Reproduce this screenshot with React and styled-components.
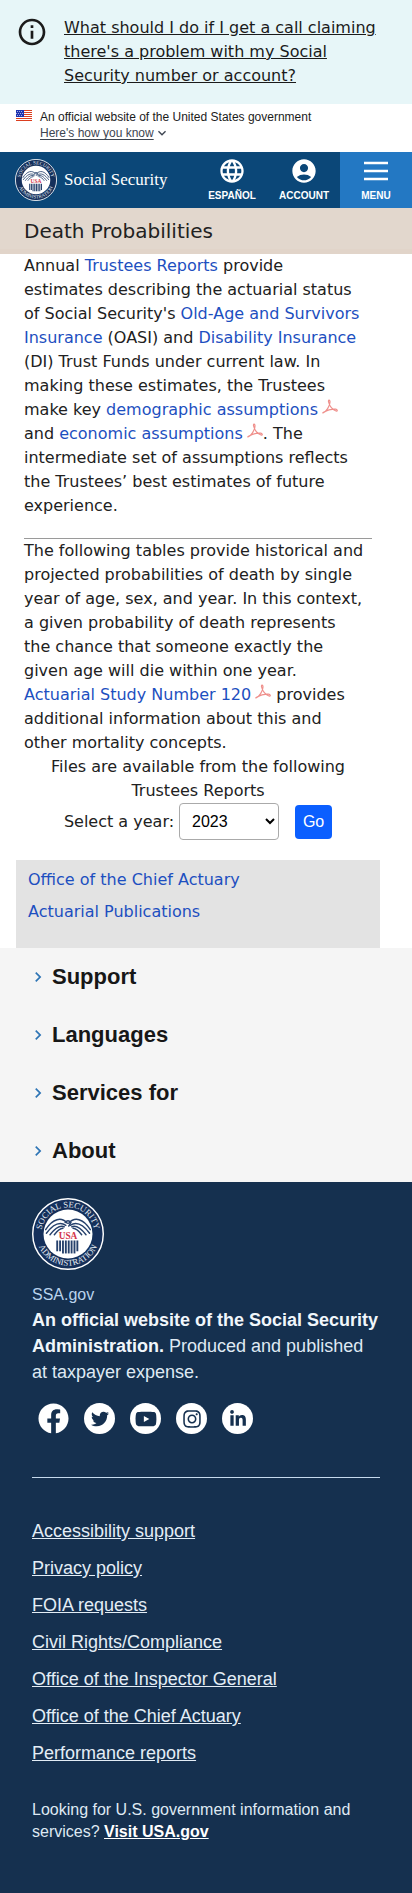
import React from "react";
import styled, { createGlobalStyle } from "styled-components";
import { MdInfoOutline, MdLanguage, MdAccountCircle, MdExpandMore, MdChevronRight } from "react-icons/md";
import { FaFacebook, FaTwitter, FaYoutube, FaInstagram, FaLinkedinIn } from "react-icons/fa";

const sans = `"Liberation Sans", Arial, sans-serif`;
const wide = `"DejaVu Sans", Verdana, sans-serif`;

const GlobalStyle = createGlobalStyle`
  *, *::before, *::after { box-sizing: border-box; }
  body { margin: 0; background: #fff; color: #212121; font: 16px/24px ${wide}; }
  p, h1, h2, ul { margin: 0; padding: 0; }
  ul { list-style: none; }
`;

const Alert = styled.aside`
  display: flex;
  gap: 16px;
  padding: 16px 24px 16px 16px;
  background: #e7f6f8;
`;
const AlertIcon = styled(MdInfoOutline)`
  flex: none;
  width: 32px;
  height: 32px;
  color: #1b1b1b;
`;
const AlertLink = styled.a`
  color: #1b1b1b;
`;

const GovBanner = styled.div`
  display: flex;
  gap: 8px;
  padding: 5px 16px 11px;
  font: 12px/16px ${sans};
  color: #1b1b1b;
  svg { flex: none; }
`;
const Flag = styled.svg`
  width: 16px;
  height: 11px;
  margin-top: 1px;
`;
const BannerButton = styled.button`
  display: flex;
  align-items: center;
  padding: 0;
  border: 0;
  background: none;
  font: inherit;
  color: #3d4551;
  span { text-decoration: underline; text-underline-offset: 2px; }
  svg { width: 16px; height: 16px; }
`;

const Header = styled.header`
  display: flex;
  align-items: stretch;
  min-height: 56px;
  background: #0b4778;
`;
const Brand = styled.a`
  display: flex;
  align-items: center;
  gap: 7px;
  flex: 1;
  padding-left: 15px;
  color: #fff;
  text-decoration: none;
  font: 17px/24px "Liberation Serif", "Times New Roman", serif;
  white-space: nowrap;
`;
const HeaderItem = styled.button`
  display: flex;
  flex-direction: column;
  align-items: center;
  justify-content: center;
  gap: 4px;
  width: 72px;
  padding: 0;
  border: 0;
  background: ${(p) => (p.$active ? "#2378c3" : "none")};
  color: #fff;
  font: bold 10px/14px ${sans};
  svg { width: 28px; height: 28px; }
`;

const TitleBar = styled.div`
  padding: 11px 24px 6px;
  background: #e2d7cd;
  border-bottom: 5px solid #e1d4c9;
`;
const Title = styled.h1`
  font-size: 20px;
  line-height: 24px;
  font-weight: normal;
`;

const Content = styled.main`
  padding: 0 40px 0 24px;
`;
const Paragraph = styled.p`
  padding-right: 6px;
`;
const Rule = styled.hr`
  height: 1px;
  margin: 20px 0 0;
  border: 0;
  background: #9a9a9a;
`;
const TextLink = styled.a`
  color: #1d4fc0;
  text-decoration: none;
`;
const PdfSvg = styled.svg`
  width: 16px;
  height: 16px;
  margin-left: 4px;
`;
const YearForm = styled.form`
  display: flex;
  flex-wrap: wrap;
  align-items: center;
  justify-content: center;
`;
const YearHeading = styled.p`
  text-align: center;
`;
const YearSelect = styled.select`
  width: 100px;
  height: 37px;
  margin: 0 16px 0 5px;
  padding: 0 0 0 8px;
  border: 1px solid #aaa;
  border-radius: 4px;
  background: #fff;
  color: #000;
  font: 16px ${sans};
`;
const GoButton = styled.button`
  width: 37px;
  height: 34px;
  padding: 0;
  border: 0;
  border-radius: 4px;
  background: #0b5fff;
  color: #fff;
  font: 16px ${sans};
`;
const Related = styled.nav`
  margin: 20px 32px 0 16px;
  padding: 4px 12px 20px;
  background: #e3e3e3;
  a { display: block; line-height: 32px; }
`;

const Sections = styled.nav`
  padding: 0 32px 2px;
  background: #f5f5f5;
`;
const SectionButton = styled.button`
  display: flex;
  align-items: center;
  width: 100%;
  height: 58px;
  padding: 0;
  border: 0;
  background: none;
  color: #171717;
  font: bold 22px/28px ${sans};
  svg { width: 20px; height: 20px; color: #2e75b5; margin-left: -4px; margin-right: 4px; }
`;

const Footer = styled.footer`
  padding: 16px 32px 51px;
  background: #15304f;
  color: #dfe9f3;
  font: 18px/26px ${sans};
  > svg { display: block; }
`;
const SiteName = styled.p`
  margin-top: 13px;
  font-size: 16px;
  line-height: 24px;
  color: #b9d3ec;
`;
const Tagline = styled.p`
  strong { color: #f0f6fb; }
`;
const Social = styled.ul`
  display: flex;
  gap: 15px;
  padding: 18px 6px 43px;
  border-bottom: 1px solid #c5d9ec;
`;
const SocialLink = styled.a`
  display: flex;
  align-items: center;
  justify-content: center;
  width: 31px;
  height: 31px;
  border-radius: 50%;
  background: ${(p) => (p.$plain ? "none" : "#fff")};
  color: ${(p) => (p.$plain ? "#fff" : "#15304f")};
  svg { flex: none; width: ${(p) => p.$size}px; height: ${(p) => p.$size}px; }
`;
const FooterLinks = styled.ul`
  display: grid;
  gap: 11px;
  padding-top: 40px;
  a { color: #e3edf6; }
`;
const UsaGov = styled.p`
  margin-top: 33px;
  font-size: 16px;
  line-height: 22px;
  a { color: #fff; font-weight: bold; }
`;

function Seal({ size, id }) {
  const stripes = [35, 39, 43, 47, 51, 55, 59, 63];
  return (
    <svg width={size} height={size} viewBox="0 0 100 100" aria-label="Social Security Administration seal" role="img">
      <defs>
        <path id={`${id}-top`} d="M13 50a37 37 0 0 1 74 0" />
        <path id={`${id}-bottom`} d="M6 50a44 44 0 0 0 88 0" />
      </defs>
      <circle cx="50" cy="50" r="49" fill="#15305b" stroke="#fff" strokeWidth="2" />
      <circle cx="50" cy="50" r="34" fill="#fff" />
      <g fill="#e6edf5" fontFamily="Liberation Serif, serif" fontSize="12" textAnchor="middle">
        <text><textPath href={`#${id}-top`} startOffset="50%">SOCIAL SECURITY</textPath></text>
        <text><textPath href={`#${id}-bottom`} startOffset="50%">ADMINISTRATION</textPath></text>
      </g>
      <g fill="none" stroke="#26416c" strokeWidth="2" strokeLinecap="round">
        <path d="M49 35C41 26 29 28 19 44M47 38C38 32 29 37 20 49M45 40C38 37 32 42 25 51M43 42C38 42 34 47 31 51" />
        <path d="M51 35C59 26 71 28 81 44M53 38C62 32 71 37 80 49M55 40C62 37 68 42 75 51M57 42C62 42 66 47 69 51" />
        <path d="M46 34q4-5 8 0l-3 5" />
      </g>
      {stripes.map((x) => (
        <path key={x} d={`M${x} 59v${x < 40 || x > 60 ? 15 : 18}`} stroke="#26416c" strokeWidth="2.6" />
      ))}
      <text x="50" y="57" textAnchor="middle" fontFamily="Liberation Serif, serif" fontWeight="bold" fontSize="13" fill="#d3334a">USA</text>
    </svg>
  );
}

function PdfIcon() {
  return (
    <PdfSvg viewBox="0 0 16 16" fill="none" stroke="#ef8f8b" strokeWidth="1.2" role="img" aria-label="PDF">
      <path d="M1 14c3-1 7-7 7-11 0-3-2-2-1.400 0 .8 4 4 8 7.400 9 2 .4 1.500-1.500-.5-1.800-4-.4-8 .8-11.500 2.800-1 .6-1.500 1-1 1z" />
    </PdfSvg>
  );
}

const social = [
  ["Facebook", FaFacebook, 31, true],
  ["Twitter", FaTwitter, 18],
  ["YouTube", FaYoutube, 22],
  ["Instagram", FaInstagram, 20],
  ["LinkedIn", FaLinkedinIn, 18],
];

const footerLinks = [
  "Accessibility support",
  "Privacy policy",
  "FOIA requests",
  "Civil Rights/Compliance",
  "Office of the Inspector General",
  "Office of the Chief Actuary",
  "Performance reports",
];

export default function App() {
  return (
    <>
      <GlobalStyle />
      <Alert>
        <AlertIcon />
        <AlertLink href="#scam">
          What should I do if I get a call claiming there's a problem with my Social Security number or account?
        </AlertLink>
      </Alert>
      <GovBanner>
        <Flag viewBox="0 0 16 11">
          <path fill="#fff" d="M0 0h16v11H0z" />
          <path stroke="#db3e1f" d="M0 .5h16M0 2.500h16M0 4.500h16M0 6.500h16M0 8.500h16M0 10.500h16" />
          <path fill="#1e33b1" d="M0 0h8v7H0z" />
          <path stroke="#fff" strokeDasharray="1 1" strokeWidth=".6" d="M1 1.500h6M0 3.500h7M1 5.500h6" />
        </Flag>
        <div>
          <p>An official website of the United States government</p>
          <BannerButton type="button">
            <span>Here's how you know</span>
            <MdExpandMore />
          </BannerButton>
        </div>
      </GovBanner>
      <Header>
        <Brand href="#home">
          <Seal size={42} id="header-seal" />
          Social Security
        </Brand>
        <HeaderItem type="button"><MdLanguage />ESPAÑOL</HeaderItem>
        <HeaderItem type="button"><MdAccountCircle />ACCOUNT</HeaderItem>
        <HeaderItem type="button" $active>
          <svg viewBox="0 0 28 28" stroke="#fff" strokeWidth="2.600"><path d="M2 6h24M2 14h24M2 22h24" /></svg>
          MENU
        </HeaderItem>
      </Header>
      <TitleBar><Title>Death Probabilities</Title></TitleBar>
      <Content>
        <Paragraph>
          Annual <TextLink href="#tr">Trustees Reports</TextLink> provide estimates describing the actuarial status of
          Social Security's <TextLink href="#oasi">Old-Age and Survivors Insurance</TextLink> (OASI) and{" "}
          <TextLink href="#di">Disability Insurance</TextLink> (DI) Trust Funds under current law. In making these
          estimates, the Trustees make key <TextLink href="#demographic">demographic assumptions</TextLink>
          <PdfIcon /> and <TextLink href="#economic">economic assumptions</TextLink>
          <PdfIcon />. The intermediate set of assumptions reflects the Trustees’ best estimates of future experience.
        </Paragraph>
        <Rule />
        <Paragraph>
          The following tables provide historical and projected probabilities of death by single year of age, sex, and
          year. In this context, a given probability of death represents the chance that someone exactly the given age
          will die within one year. <TextLink href="#study">Actuarial Study Number 120</TextLink>
          <PdfIcon /> provides additional information about this and other mortality concepts.
        </Paragraph>
        <YearHeading>Files are available from the following Trustees Reports</YearHeading>
        <YearForm>
          <label htmlFor="year">Select a year:</label>
          <YearSelect id="year" defaultValue="2023">
            <option>2023</option>
            <option>2022</option>
          </YearSelect>
          <GoButton type="button">Go</GoButton>
        </YearForm>
      </Content>
      <Related>
        <TextLink href="#oca">Office of the Chief Actuary</TextLink>
        <TextLink href="#pubs">Actuarial Publications</TextLink>
      </Related>
      <Sections>
        {["Support", "Languages", "Services for", "About"].map((name) => (
          <SectionButton type="button" key={name}><MdChevronRight />{name}</SectionButton>
        ))}
      </Sections>
      <Footer>
        <Seal size={72} id="footer-seal" />
        <SiteName>SSA.gov</SiteName>
        <Tagline>
          <strong>An official website of the Social Security Administration.</strong> Produced and published at
          taxpayer expense.
        </Tagline>
        <Social>
          {social.map(([name, Icon, size, plain]) => (
            <li key={name}>
              <SocialLink href={`#${name}`} aria-label={name} $size={size} $plain={plain}><Icon /></SocialLink>
            </li>
          ))}
        </Social>
        <FooterLinks>
          {footerLinks.map((name) => (
            <li key={name}><a href="#footer">{name}</a></li>
          ))}
        </FooterLinks>
        <UsaGov>
          Looking for U.S. government information and services? <a href="#usa">Visit USA.gov</a>
        </UsaGov>
      </Footer>
    </>
  );
}
